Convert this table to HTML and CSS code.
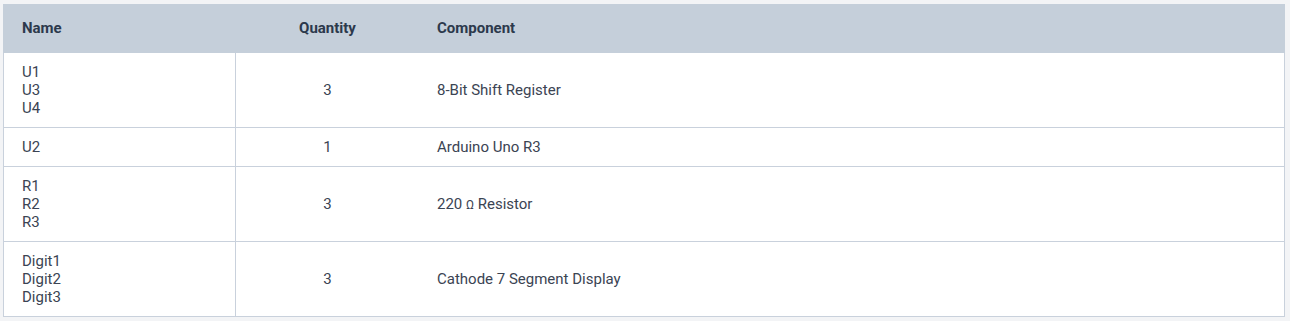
FILE: index.html
```html
<!DOCTYPE html>
<html>
<head>
<meta charset="utf-8">
<link rel="stylesheet" href="styles.css">
</head>
<body>
<div class="page">
  <table class="bom">
    <colgroup>
      <col class="col-name">
      <col class="col-qty">
      <col class="col-comp">
    </colgroup>
    <thead>
      <tr>
        <th class="name">Name</th>
        <th class="qty">Quantity</th>
        <th class="comp">Component</th>
      </tr>
    </thead>
    <tbody>
      <tr>
        <td class="name"><div>U1</div><div>U3</div><div>U4</div></td>
        <td class="qty">3</td>
        <td class="comp">8-Bit Shift Register</td>
      </tr>
      <tr>
        <td class="name"><div>U2</div></td>
        <td class="qty">1</td>
        <td class="comp">Arduino Uno R3</td>
      </tr>
      <tr>
        <td class="name"><div>R1</div><div>R2</div><div>R3</div></td>
        <td class="qty">3</td>
        <td class="comp">220 <span class="ohm">Ω</span> Resistor</td>
      </tr>
      <tr>
        <td class="name"><div>Digit1</div><div>Digit2</div><div>Digit3</div></td>
        <td class="qty">3</td>
        <td class="comp">Cathode 7 Segment Display</td>
      </tr>
    </tbody>
  </table>
</div>
</body>
</html>
```
FILE: styles.css
```css
html, body {
  margin: 0;
  padding: 0;
  background: #f3f4f6;
}
.page {
  padding: 4px 5px 4px 3px;
  font-family: Roboto, "Liberation Sans", Arial, sans-serif;
  font-size: 15px;
}
.bom {
  width: 1282px;
  table-layout: fixed;
  border-collapse: separate;
  border-spacing: 0;
  background: #ffffff;
}
.col-name { width: 233px; }
.col-qty { width: 183px; }
.bom th {
  background: #c5cfda;
  color: #2c394c;
  font-weight: 700;
  line-height: 18px;
  padding: 15px 0 16px 0;
  text-align: left;
}
.bom th.name { padding-left: 19px; }
.bom th.qty { text-align: center; }
.bom th.comp { padding-left: 18px; }
.bom td {
  color: #3b4453;
  line-height: 18px;
  padding: 10px 0 10px 0;
  border-bottom: 1px solid #c9d1dc;
  vertical-align: middle;
}
.bom td.name {
  padding-left: 18px;
  border-left: 1px solid #c9d1dc;
  border-right: 1px solid #c9d1dc;
}
.bom td.qty { text-align: center; }
.bom td.comp {
  padding-left: 18px;
  border-right: 1px solid #c9d1dc;
}
.ohm { font-size: 12px; }
```
